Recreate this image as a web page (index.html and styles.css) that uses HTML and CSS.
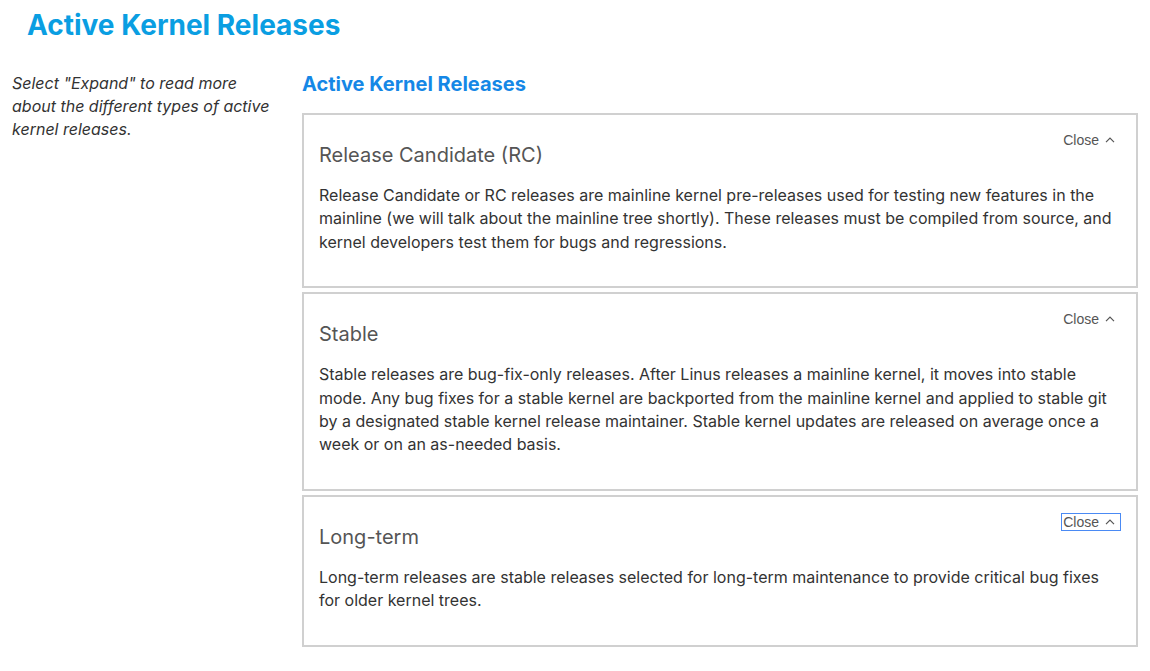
FILE: index.html
```html
<!DOCTYPE html>
<html lang="en">
<head>
<meta charset="utf-8">
<title>Active Kernel Releases</title>
<link rel="stylesheet" href="styles.css">
</head>
<body>
<header class="page-header">
  <h1 class="page-title">Active Kernel Releases</h1>
</header>
<main class="layout">
  <aside class="intro">
    <p>Select "Expand" to read more about the different types of active kernel releases.</p>
  </aside>
  <section class="content">
    <h2 class="section-title">Active Kernel Releases</h2>
    <div class="accordion">
      <article class="panel">
        <div class="panel-head">
          <h3 class="panel-title">Release Candidate (RC)</h3>
          <button class="toggle" type="button">Close <svg class="caret" width="10" height="6" viewBox="0 0 10 6"><path d="M1 5.2 L5 1.2 L9 5.2" fill="none" stroke="#555" stroke-width="1.2"/></svg></button>
        </div>
        <p class="panel-text">Release Candidate or RC releases are mainline kernel pre-releases used for testing new features in the mainline (we will talk about the mainline tree shortly). These releases must be compiled from source, and kernel developers test them for bugs and regressions.</p>
      </article>
      <article class="panel">
        <div class="panel-head">
          <h3 class="panel-title">Stable</h3>
          <button class="toggle" type="button">Close <svg class="caret" width="10" height="6" viewBox="0 0 10 6"><path d="M1 5.2 L5 1.2 L9 5.2" fill="none" stroke="#555" stroke-width="1.2"/></svg></button>
        </div>
        <p class="panel-text">Stable releases are bug-fix-only releases. After Linus releases a mainline kernel, it moves into stable mode. Any bug fixes for a stable kernel are backported from the mainline kernel and applied to stable git by a designated stable kernel release maintainer. Stable kernel updates are released on average once a week or on an as-needed basis.</p>
      </article>
      <article class="panel">
        <div class="panel-head">
          <h3 class="panel-title">Long-term</h3>
          <button class="toggle focused" type="button">Close <svg class="caret" width="10" height="6" viewBox="0 0 10 6"><path d="M1 5.2 L5 1.2 L9 5.2" fill="none" stroke="#555" stroke-width="1.2"/></svg></button>
        </div>
        <p class="panel-text">Long-term releases are stable releases selected for long-term maintenance to provide critical bug fixes for older kernel trees.</p>
      </article>
    </div>
  </section>
</main>
</body>
</html>
```

FILE: styles.css
```css
* { box-sizing: border-box; }

body {
  margin: 0;
  background: #fff;
  font-family: Inter, "Noto Sans", sans-serif;
  color: #333;
}

.page-header {
  padding: 8px 27px 0;
}

.page-title {
  margin: 0;
  font-size: 28px;
  line-height: 34px;
  font-weight: 700;
  color: #0a9ee2;
}

.layout {
  display: grid;
  grid-template-columns: 278px 836px;
  column-gap: 12px;
  padding: 0 12px;
  margin-top: 30px;
}

.intro p {
  margin: 0;
  max-width: 264px;
  font-size: 16px;
  line-height: 23px;
  font-style: italic;
  color: #333;
}

.section-title {
  margin: 0 0 17px;
  font-size: 20px;
  line-height: 24px;
  font-weight: 700;
  color: #1587e6;
}

.accordion {
  display: flex;
  flex-direction: column;
  gap: 4px;
}

.panel {
  border: 2px solid #d0d0d0;
  padding: 17px 16px 18px 15px;
}

.panel-head {
  display: flex;
  justify-content: space-between;
  align-items: flex-start;
}

.panel-title {
  margin: 11px 0 0;
  font-size: 20px;
  line-height: 24px;
  font-weight: 400;
  color: #555;
}

.toggle {
  display: inline-flex;
  align-items: center;
  gap: 6px;
  background: none;
  border: 0;
  padding: 0 5px 0 1px;
  height: 16px;
  font-family: "Liberation Sans", Arial, sans-serif;
  font-size: 14px;
  color: #555;
  cursor: pointer;
}

.toggle.focused {
  outline: 1px solid #4a8af4;
  outline-offset: 0;
}

.caret { display: block; }

.panel-text {
  margin: 17px 0 14px;
  font-size: 16px;
  line-height: 23.4px;
  color: #333;
}
```
